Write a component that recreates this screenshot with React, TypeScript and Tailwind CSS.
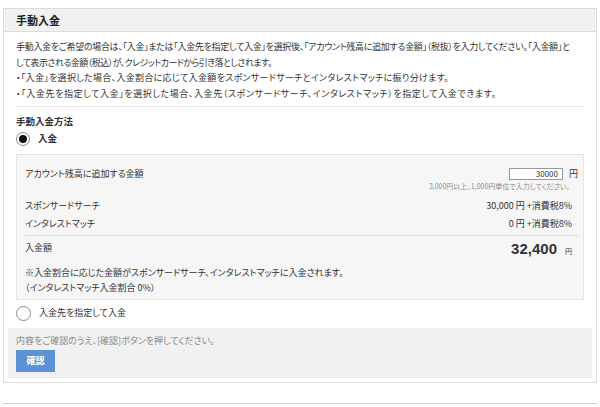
export default function App() {
  return (
    <div className="h-[407px] w-[600px] overflow-hidden bg-white px-[3px] pt-2 font-['Noto_Sans_CJK_JP',sans-serif] text-[9px] text-[#333] [font-feature-settings:'palt']">
      <div className="h-[375px] border border-[#dcdcdc]">
        <div className="flex h-[23px] items-center border-b border-[#dedede] bg-[#f1f1f1] px-3">
          <h1 className="text-[11px] font-bold text-[#222]">手動入金</h1>
        </div>

        <div className="px-3">
          <div className="mt-[7px] border-b border-[#e6e6e6] pb-[5px] leading-[15.6px]">
            <p className="whitespace-nowrap tracking-[-0.3px]">
              手動入金をご希望の場合は、「入金」または「入金先を指定して入金」を選択後、「アカウント残高に追加する金額」（税抜）を入力してください。「入金額」と
            </p>
            <p className="tracking-[-0.55px]">して表示される金額（税込）が、クレジットカードから引き落としされます。</p>
            <p className="tracking-[0.3px]">・「入金」を選択した場合、入金割合に応じて入金額をスポンサードサーチとインタレストマッチに振り分けます。</p>
            <p className="tracking-[0.6px]">・「入金先を指定して入金」を選択した場合、入金先（スポンサードサーチ、インタレストマッチ）を指定して入金できます。</p>
          </div>

          <h2 className="mt-[7px] text-[9.5px] font-bold leading-[14px]">手動入金方法</h2>
          <label className="mt-[3px] flex items-center gap-2">
            <span className="flex h-[14px] w-[14px] items-center justify-center rounded-full border border-[#8a8a8a] bg-white">
              <span className="h-[8px] w-[8px] rounded-full bg-[#111]" />
            </span>
            <span className="text-[9.5px] font-bold">入金</span>
          </label>

          <div className="mt-2 h-[146px] border border-[#e4e4e4] bg-[#f6f6f6] pl-2 pr-[5px] pt-3">
            <div className="flex justify-between">
              <span className="leading-[14px]">アカウント残高に追加する金額</span>
              <div className="flex flex-col items-end">
                <div className="flex h-[14px] items-center gap-[6px]">
                  <input
                    readOnly
                    value="30000"
                    className="h-[12px] w-[54px] border border-[#999] bg-white px-1 text-right text-[8px] outline-none"
                  />
                  <span>円</span>
                </div>
                <span className="mr-[8px] text-[7px] leading-[11px] text-[#8a8a8a]">
                  3,000円以上、1,000円単位で入力してください。
                </span>
              </div>
            </div>

            <div className="mt-[7px] flex justify-between leading-[14px]">
              <span>スポンサードサーチ</span>
              <span className="mr-[6px]">30,000 円 +消費税8%</span>
            </div>
            <div className="mt-1 flex justify-between border-b border-[#dcdcdc] pb-1 leading-[14px]">
              <span>インタレストマッチ</span>
              <span className="mr-[6px]">0 円 +消費税8%</span>
            </div>

            <div className="flex h-[24px] items-center justify-between">
              <span>入金額</span>
              <span className="mr-[6px] mt-[3px] flex items-baseline gap-2">
                <span className="font-['Liberation_Sans',sans-serif] text-[15px] font-bold text-[#333]">32,400</span>
                <span className="text-[7px]">円</span>
              </span>
            </div>

            <div className="mt-[5px] leading-[15px]">
              <p>※入金割合に応じた金額がスポンサードサーチ、インタレストマッチに入金されます。</p>
              <p>（インタレストマッチ入金割合 0%）</p>
            </div>
          </div>

          <label className="mt-[6px] flex items-center gap-2">
            <span className="h-[15px] w-[15px] rounded-full border border-[#8a8a8a] bg-white" />
            <span>入金先を指定して入金</span>
          </label>
        </div>

        <div className="mx-1 mt-[7px] h-[50px] bg-[#f1f1f1] px-2 pt-[7px]">
          <p className="leading-[12px] text-[#8a8a8a]">内容をご確認のうえ、[確認]ボタンを押してください。</p>
          <button className="mt-[3px] h-[22px] w-[39px] bg-[#5d93d6] text-[9px] font-bold text-white">確認</button>
        </div>
      </div>
      <div className="mt-[20px] border-t border-[#cfcfcf]" />
    </div>
  );
}
